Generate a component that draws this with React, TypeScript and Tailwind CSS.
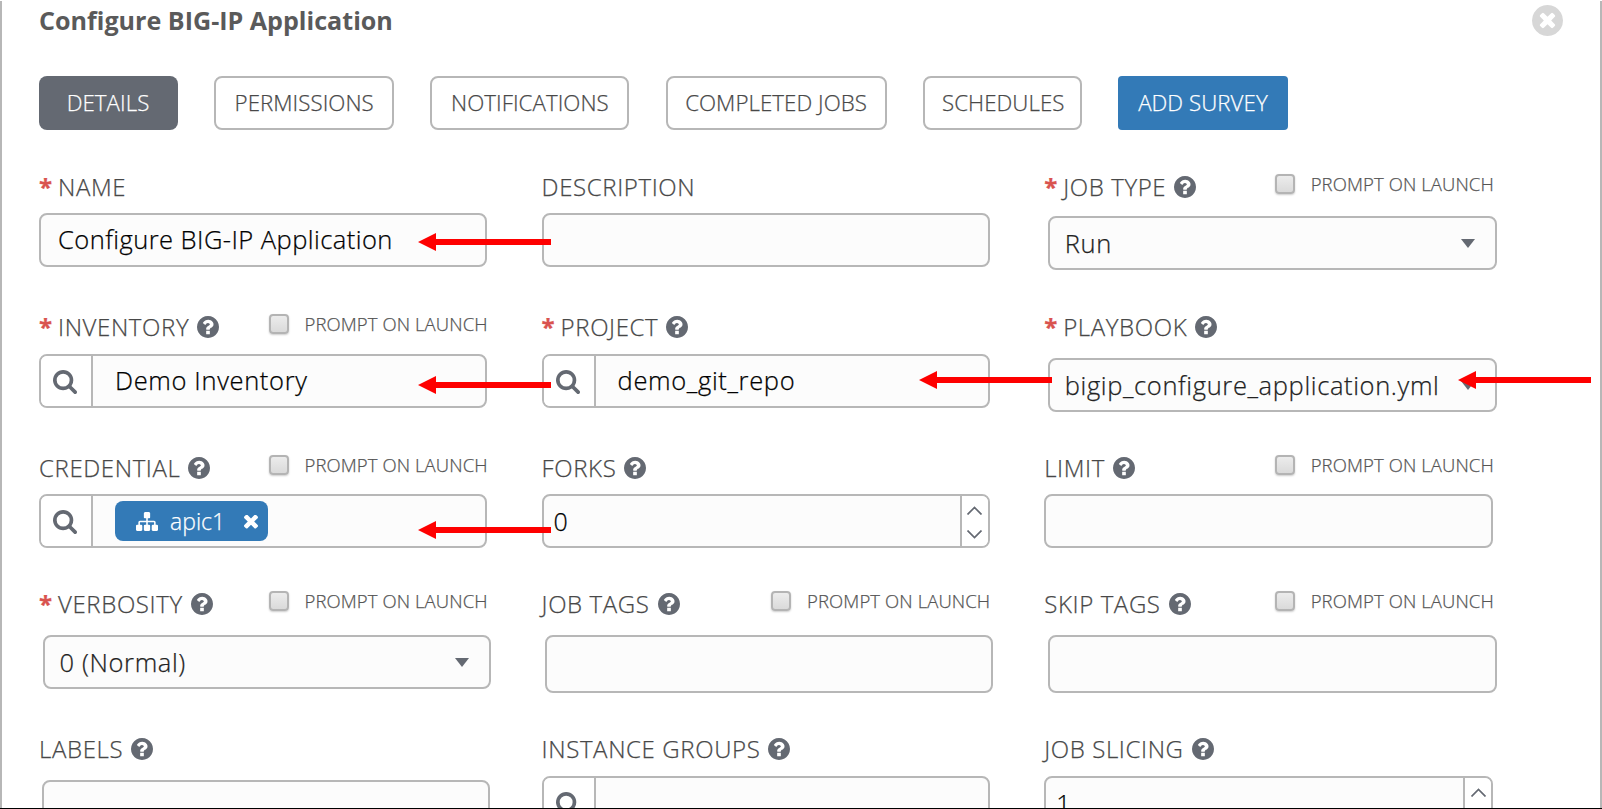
import React from 'react';

const PATHS = {
  question:
    'M1024 1376v-192q0-14-9-23t-23-9h-192q-14 0-23 9t-9 23v192q0 14 9 23t23 9h192q14 0 23-9t9-23zm256-672q0-88-55.5-163t-138.5-116-170-41q-243 0-371 213-15 24 8 42l132 100q7 6 19 6 16 0 25-12 53-68 86-92 34-24 86-24 48 0 85.5 26t37.5 59q0 38-20 61t-68 45q-63 28-115.5 86.5t-52.5 125.5v36q0 14 9 23t23 9h192q14 0 23-9t9-23q0-19 21.5-49.5t54.5-49.5q32-18 49-28.5t46-35 44.5-48 28-60.5 12.5-81zm384 192q0 209-103 385.5t-279.5 279.5-385.5 103-385.5-103-279.5-279.5-103-385.5 103-385.5 279.5-279.5 385.5-103 385.5 103 279.5 279.5 103 385.5z',
  search:
    'M1152 832q0-185-131.5-316.5t-316.5-131.5-316.5 131.5-131.5 316.5 131.5 316.5 316.5 131.5 316.5-131.5 131.5-316.5zm512 832q0 52-38 90t-90 38q-54 0-90-38l-343-342q-179 124-399 124-143 0-273.5-55.5t-225-150-150-225-55.5-273.5 55.5-273.5 150-225 225-150 273.5-55.5 273.5 55.5 225 150 150 225 55.5 273.5q0 220-124 399l343 343q37 37 37 90z',
  times:
    'M1490 1322q0 40-28 68l-136 136q-28 28-68 28t-68-28l-294-294-294 294q-28 28-68 28t-68-28l-136-136q-28-28-28-68t28-68l294-294-294-294q-28-28-28-68t28-68l136-136q28-28 68-28t68 28l294 294 294-294q28-28 68-28t68 28l136 136q28 28 28 68t-28 68l-294 294 294 294q28 28 28 68z',
  timesCircle:
    'M1277 1122q0-26-19-45l-181-181 181-181q19-19 19-45 0-27-19-46l-90-90q-19-19-46-19-26 0-45 19l-181 181-181-181q-19-19-45-19-27 0-46 19l-90 90q-19 19-19 46 0 26 19 45l181 181-181 181q-19 19-19 45 0 27 19 46l90 90q19 19 46 19 26 0 45-19l181-181 181 181q19 19 45 19 27 0 46-19l90-90q19-19 19-46zm387-226q0 209-103 385.5t-279.5 279.5-385.5 103-385.5-103-279.5-279.5-103-385.5 103-385.5 279.5-279.5 385.5-103 385.5 103 279.5 279.5 103 385.5z',
  sitemap:
    'M1792 1248v320q0 40-28 68t-68 28h-320q-40 0-68-28t-28-68v-320q0-40 28-68t68-28h96v-192h-512v192h96q40 0 68 28t28 68v320q0 40-28 68t-68 28h-320q-40 0-68-28t-28-68v-320q0-40 28-68t68-28h96v-192h-512v192h96q40 0 68 28t28 68v320q0 40-28 68t-68 28h-320q-40 0-68-28t-28-68v-320q0-40 28-68t68-28h96v-192q0-52 38-90t90-38h512v-192h-96q-40 0-68-28t-28-68v-320q0-40 28-68t68-28h320q40 0 68 28t28 68v320q0 40-28 68t-68 28h-96v192h512q52 0 90 38t38 90v192h96q40 0 68 28t28 68z',
};

function Icon({ name, box = '0 0 1792 1792', className }: { name: keyof typeof PATHS; box?: string; className: string }) {
  return (
    <svg viewBox={box} fill="currentColor" className={`shrink-0 ${className}`}>
      <path d={PATHS[name]} />
    </svg>
  );
}

function Prompt() {
  return (
    <div className="-mt-[7px] ml-auto flex items-center">
      <span className="h-5 w-5 rounded-[4px] border-2 border-[#b4b4b4] bg-linear-to-b from-[#ececec] to-[#dadada] shadow-[0_1px_2px_rgba(0,0,0,0.2)]" />
      <span className="ml-[16px] w-[182.500px] text-[18.5px] leading-6 tracking-[0.1px] whitespace-nowrap text-[#555]">
        PROMPT ON LAUNCH
      </span>
    </div>
  );
}

type FieldProps = {
  label: string;
  required?: boolean;
  help?: boolean;
  prompt?: boolean;
  children: React.ReactNode;
};

function Field({ label, required, help = true, prompt, children }: FieldProps) {
  return (
    <div className="flex flex-col">
      <div className="flex h-[34px] items-center">
        {required && <span className="w-[19px] text-[24px] leading-[34px] font-bold text-[#d9534f]">*</span>}
        <span className="text-[24px] leading-[34px] tracking-[0.62px] whitespace-nowrap text-[#484848]">{label}</span>
        {help && <Icon name="question" box="128 128 1536 1536" className="ml-[8px] h-[22px] w-[22px] text-[#646972]" />}
        {prompt && <Prompt />}
      </div>
      {children}
    </div>
  );
}

const BOX = 'flex h-[54px] w-full shrink-0 items-center rounded-[8px] border-2 border-[#b7b7b7] bg-[#fcfcfc]';

function Input({ children, className = '' }: { children?: React.ReactNode; className?: string }) {
  return <div className={`${BOX} pb-[2px] pl-[17px] text-[25.5px] tracking-[0.45px] text-black ${className}`}>{children}</div>;
}

function Lookup({ children }: { children?: React.ReactNode }) {
  return (
    <div className={`${BOX} overflow-hidden text-[25.5px] tracking-[0.65px] text-black`}>
      <div className="flex h-full w-[52px] shrink-0 items-center justify-center border-r-2 border-[#b7b7b7] bg-white">
        <Icon name="search" box="0 128 1664 1664" className="mt-[2px] mr-[2px] h-[24px] w-[24px] text-[#646972]" />
      </div>
      <div className="flex items-center pl-[22px]">{children}</div>
    </div>
  );
}

function Select({ children }: { children: React.ReactNode }) {
  return (
    <div className={`${BOX} relative left-[3.500px] justify-between pr-[20px] pl-[15px] text-[25.5px] tracking-[0.63px] text-[#222]`}>
      <span className="whitespace-nowrap">{children}</span>
      <svg viewBox="0 0 14 9" className="mt-px h-[9px] w-[14px] shrink-0 fill-[#646972]">
        <path d="M0 0h14L7 9z" />
      </svg>
    </div>
  );
}

function Spinner({ children }: { children: React.ReactNode }) {
  return (
    <div className={`${BOX} overflow-hidden pl-[10px] text-[25px] text-black`}>
      <span className="flex-1 pt-px">{children}</span>
      <div className="flex h-full w-[28px] flex-col items-center justify-between border-l-2 border-[#b7b7b7] bg-white pt-[10px] pb-[7px]">
        <svg viewBox="0 0 15 9" className="h-[9px] w-[15px] fill-none stroke-[#646972] stroke-[1.7]">
          <path d="M.5 8.500l7-7 7 7" />
        </svg>
        <svg viewBox="0 0 15 9" className="h-[9px] w-[15px] fill-none stroke-[#646972] stroke-[1.7]">
          <path d="M.5 .5l7 7 7-7" />
        </svg>
      </div>
    </div>
  );
}

function Arrow({ className }: { className: string }) {
  return (
    <svg viewBox="0 0 133 18" preserveAspectRatio="none" className={`absolute h-[18px] w-[133px] fill-[#fe0000] ${className}`}>
      <path d="M0 9L18 0v6h115v6H18v6z" />
    </svg>
  );
}

const TAB = 'flex h-[54px] items-center justify-center rounded-[8px] text-[22.3px] tracking-[0.05px] whitespace-nowrap';
const TABS = [
  { text: 'DETAILS', style: 'w-[139px] bg-[#646972] pr-px text-white' },
  { text: 'PERMISSIONS', style: 'w-[180px] border-2 border-[#b7b7b7] text-[#484848]' },
  { text: 'NOTIFICATIONS', style: 'w-[199px] border-2 border-[#b7b7b7] text-[#484848]' },
  { text: 'COMPLETED JOBS', style: 'w-[221px] border-2 border-[#b7b7b7] text-[#484848]' },
  { text: 'SCHEDULES', style: 'w-[159px] border-2 border-[#b7b7b7] pl-[2px] text-[#484848]' },
  { text: 'ADD SURVEY', style: 'w-[170px] rounded-[4px]! bg-[#337ab7] text-white' },
];

const ROW = 'grid shrink-0 grid-cols-[448px_448px_449px] content-start gap-x-[54.600px]';

export default function App() {
  return (
    <div className="relative flex h-[809px] w-[1602px] flex-col overflow-hidden border-b border-black bg-white pt-px font-['Open_Sans',sans-serif] font-light [-webkit-text-stroke:0.25px]">
      <div className="h-[807px] overflow-hidden border-x-2 border-[#b7b7b7] pl-[37px]">
        <header className="flex h-[40px] items-center justify-between pr-[37px]">
          <h1 className="text-[25.1px] font-bold text-[#5a5a5a] [-webkit-text-stroke:0]">Configure BIG-IP Application</h1>
          <Icon name="timesCircle" box="128 128 1536 1536" className="-mt-px h-[31px] w-[31px] text-[#d7d7d7]" />
        </header>

        <nav className="mt-[35px] flex gap-[36.200px]">
          {TABS.map((t) => (
            <div key={t.text} className={`${TAB} ${t.style}`}>
              {t.text}
            </div>
          ))}
        </nav>

        <div className={`${ROW} mt-[40px] h-[140px]`}>
          <Field label="NAME" required help={false}>
            <Input className="mt-[9px]">Configure BIG-IP Application</Input>
          </Field>
          <Field label="DESCRIPTION" help={false}>
            <Input className="mt-[9px]" />
          </Field>
          <Field label="JOB TYPE" required prompt>
            <div className="mt-[12px]">
              <Select>Run</Select>
            </div>
          </Field>
        </div>

        <div className={`${ROW} h-[141px]`}>
          <Field label="INVENTORY" required prompt>
            <div className="mt-[10px]">
              <Lookup>
                <span className="pb-[2px]">Demo Inventory</span>
              </Lookup>
            </div>
          </Field>
          <Field label="PROJECT" required>
            <div className="mt-[10px]">
              <Lookup>
                <span className="pb-[2px]">demo_git_repo</span>
              </Lookup>
            </div>
          </Field>
          <Field label="PLAYBOOK" required>
            <div className="mt-[14px]">
              <Select>bigip_configure_application.yml</Select>
            </div>
          </Field>
        </div>

        <div className={`${ROW} h-[136px]`}>
          <Field label="CREDENTIAL" prompt>
            <div className="mt-[9px]">
              <Lookup>
                <div className="flex h-[40px] w-[153px] items-center rounded-[8px] bg-[#337ab7] pl-[21px] text-[23px] text-white">
                  <Icon name="sitemap" box="0 128 1792 1536" className="h-[19px] w-[22px] text-white" />
                  <span className="ml-[12px] w-[52px] tracking-normal">apic1</span>
                  <Icon name="times" box="302 430 1188 1124" className="mt-px ml-[22px] h-[14px] w-[14px] text-white" />
                </div>
              </Lookup>
            </div>
          </Field>
          <Field label="FORKS">
            <div className="mt-[9px]">
              <Spinner>0</Spinner>
            </div>
          </Field>
          <Field label="LIMIT" prompt>
            <Input className="mt-[9px]" />
          </Field>
        </div>

        <div className={`${ROW} h-[145px]`}>
          <Field label="VERBOSITY" required prompt>
            <div className="mt-[14px]">
              <Select>0 (Normal)</Select>
            </div>
          </Field>
          <Field label="JOB TAGS" prompt>
            <Input className="relative left-[3px] mt-[14px] h-[58px]!" />
          </Field>
          <Field label="SKIP TAGS" prompt>
            <Input className="relative left-[3.500px] mt-[14px] h-[58px]!" />
          </Field>
        </div>

        <div className={ROW}>
          <Field label="LABELS">
            <Input className="relative left-[3px] mt-[14px]" />
          </Field>
          <Field label="INSTANCE GROUPS">
            <div className="mt-[10px]">
              <Lookup />
            </div>
          </Field>
          <Field label="JOB SLICING">
            <div className="mt-[10px]">
              <Spinner>1</Spinner>
            </div>
          </Field>
        </div>
      </div>

      <Arrow className="top-[233px] left-[418px]" />
      <Arrow className="top-[376px] left-[418px]" />
      <Arrow className="top-[521px] left-[418px]" />
      <Arrow className="top-[371px] left-[919px]" />
      <Arrow className="top-[371px] left-[1458px]" />
    </div>
  );
}
